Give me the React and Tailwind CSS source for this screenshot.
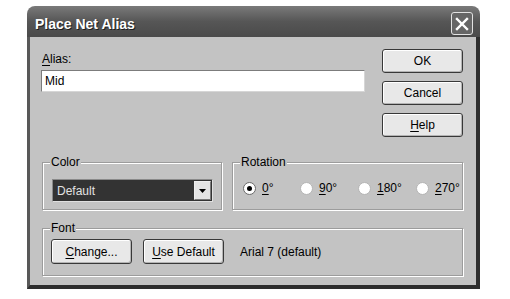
import React from "react";

// Small XP-style push button
const Btn = ({ children, className = "" }) => (
  <button
    className={`flex items-center justify-center w-[81px] border border-[#383838] rounded-[3px] bg-[#e8e8e8] shadow-[inset_1px_1px_0_#fff,inset_-1px_-1px_0_#b4b4b4] text-[12px] leading-none text-black ${className}`}
  >
    {children}
  </button>
);

const Group = ({ label, className = "", children }) => (
  <div
    className={`relative border border-[#9c9c9c] shadow-[inset_1px_1px_0_#fff,1px_1px_0_#fff] ${className}`}
  >
    <span className="absolute left-[7px] top-[-8px] bg-[#c3c3c3] px-px text-[12px] leading-[14px] text-black">
      {label}
    </span>
    {children}
  </div>
);

const Radio = ({ checked, label }) => (
  <div className="flex items-center gap-[6px]">
    <span
      className={`flex items-center justify-center w-[13px] h-[13px] rounded-full bg-white border ${
        checked ? "border-[#6a6a6a]" : "border-[#b4b4b4]"
      }`}
    >
      {checked && <span className="w-[5px] h-[5px] rounded-full bg-black" />}
    </span>
    <span className="text-[12px] leading-[14px] text-black">{label}</span>
  </div>
);

const U = ({ children }) => <span className="underline underline-offset-2">{children}</span>;

export default function App() {
  return (
    <div className="w-[510px] h-[299px] bg-white pl-[27px] pt-[6px] font-['Liberation_Sans',Arial,sans-serif]">
      <div className="flex flex-col w-[453px] h-[283px]">
        {/* Title bar */}
        <div className="flex items-start h-[31px] rounded-t-[8px] bg-linear-to-b from-[#7a7a7a] via-[#565656] to-[#4a4a4a]">
          <span className="ml-[8px] mt-[10px] text-[14px] leading-[16px] font-bold text-white [text-shadow:1px_1px_0_#1e1e1e]">
            Place Net Alias
          </span>
          <button className="ml-auto mt-[6px] mr-[7px] flex items-center justify-center w-[22px] h-[23px] rounded-[3px] border border-[#e2e2e2] bg-[#666]">
            <svg width="14" height="14" viewBox="0 0 14 14">
              <path d="M2 2 L12 12 M12 2 L2 12" stroke="#fff" strokeWidth="2.4" strokeLinecap="square" />
            </svg>
          </button>
        </div>

        {/* Body */}
        <div className="flex-1 flex flex-col bg-[#c3c3c3] border-l-[3px] border-l-[#585858] border-r-[4px] border-r-[#2e2e2e] border-b-[4px] border-b-[#2e2e2e] pl-[11px] pt-[12px] text-black">
          <div className="flex">
            <div className="flex flex-col w-[324px]">
              <div className="h-[21px] pt-[3px] pl-px text-[12px] leading-[14px]">
                <U>A</U>lias:
              </div>
              <div className="h-[22px] flex items-center bg-white border border-[#7c7c7c] border-r-[#d6d6d6] border-b-[#d6d6d6] pl-[3px] text-[12px]">
                Mid
              </div>
            </div>
            <div className="ml-[17px] flex flex-col gap-[8px]">
              <Btn className="h-[24px]">OK</Btn>
              <Btn className="h-[24px]">Cancel</Btn>
              <Btn className="h-[24px]">
                <U>H</U>elp
              </Btn>
            </div>
          </div>

          <div className="flex gap-[10px] mt-[25px] ml-px">
            <Group label="Color" className="w-[180px] h-[48px] pl-[9px] pt-[16px]">
              <div className="flex w-[161px] h-[23px] border border-[#8a8a8a] border-r-[#e0e0e0] border-b-[#e0e0e0] bg-[#333]">
                <span className="flex-1 flex items-center pl-[4px] text-[12px] text-[#e2e2e2]">Default</span>
                <span className="flex items-center justify-center w-[17px] my-px mr-px bg-[#e4e4e4] border border-[#eee] border-r-[#7a7a7a] border-b-[#7a7a7a]">
                  <svg width="7" height="4" viewBox="0 0 7 4">
                    <polygon points="0,0 7,0 3.5,4" fill="#000" />
                  </svg>
                </span>
              </div>
            </Group>
            <Group label="Rotation" className="w-[231px] h-[48px] pl-[10px] pt-[18px]">
              <div className="flex">
                <div className="w-[57px]">
                  <Radio checked label={<><U>0</U>°</>} />
                </div>
                <div className="w-[58px]">
                  <Radio label={<><U>9</U>0°</>} />
                </div>
                <div className="w-[58px]">
                  <Radio label={<><U>1</U>80°</>} />
                </div>
                <Radio label={<><U>2</U>70°</>} />
              </div>
            </Group>
          </div>

          <Group label="Font" className="mt-[18px] ml-px w-[421px] h-[48px] pl-[8px] pt-[10px]">
            <div className="flex items-center">
              <Btn className="h-[25px]">
                <U>C</U>hange...
              </Btn>
              <Btn className="h-[25px] ml-[11px]">
                <U>U</U>se Default
              </Btn>
              <span className="ml-[16px] text-[12px]">Arial 7 (default)</span>
            </div>
          </Group>
        </div>
      </div>
    </div>
  );
}
